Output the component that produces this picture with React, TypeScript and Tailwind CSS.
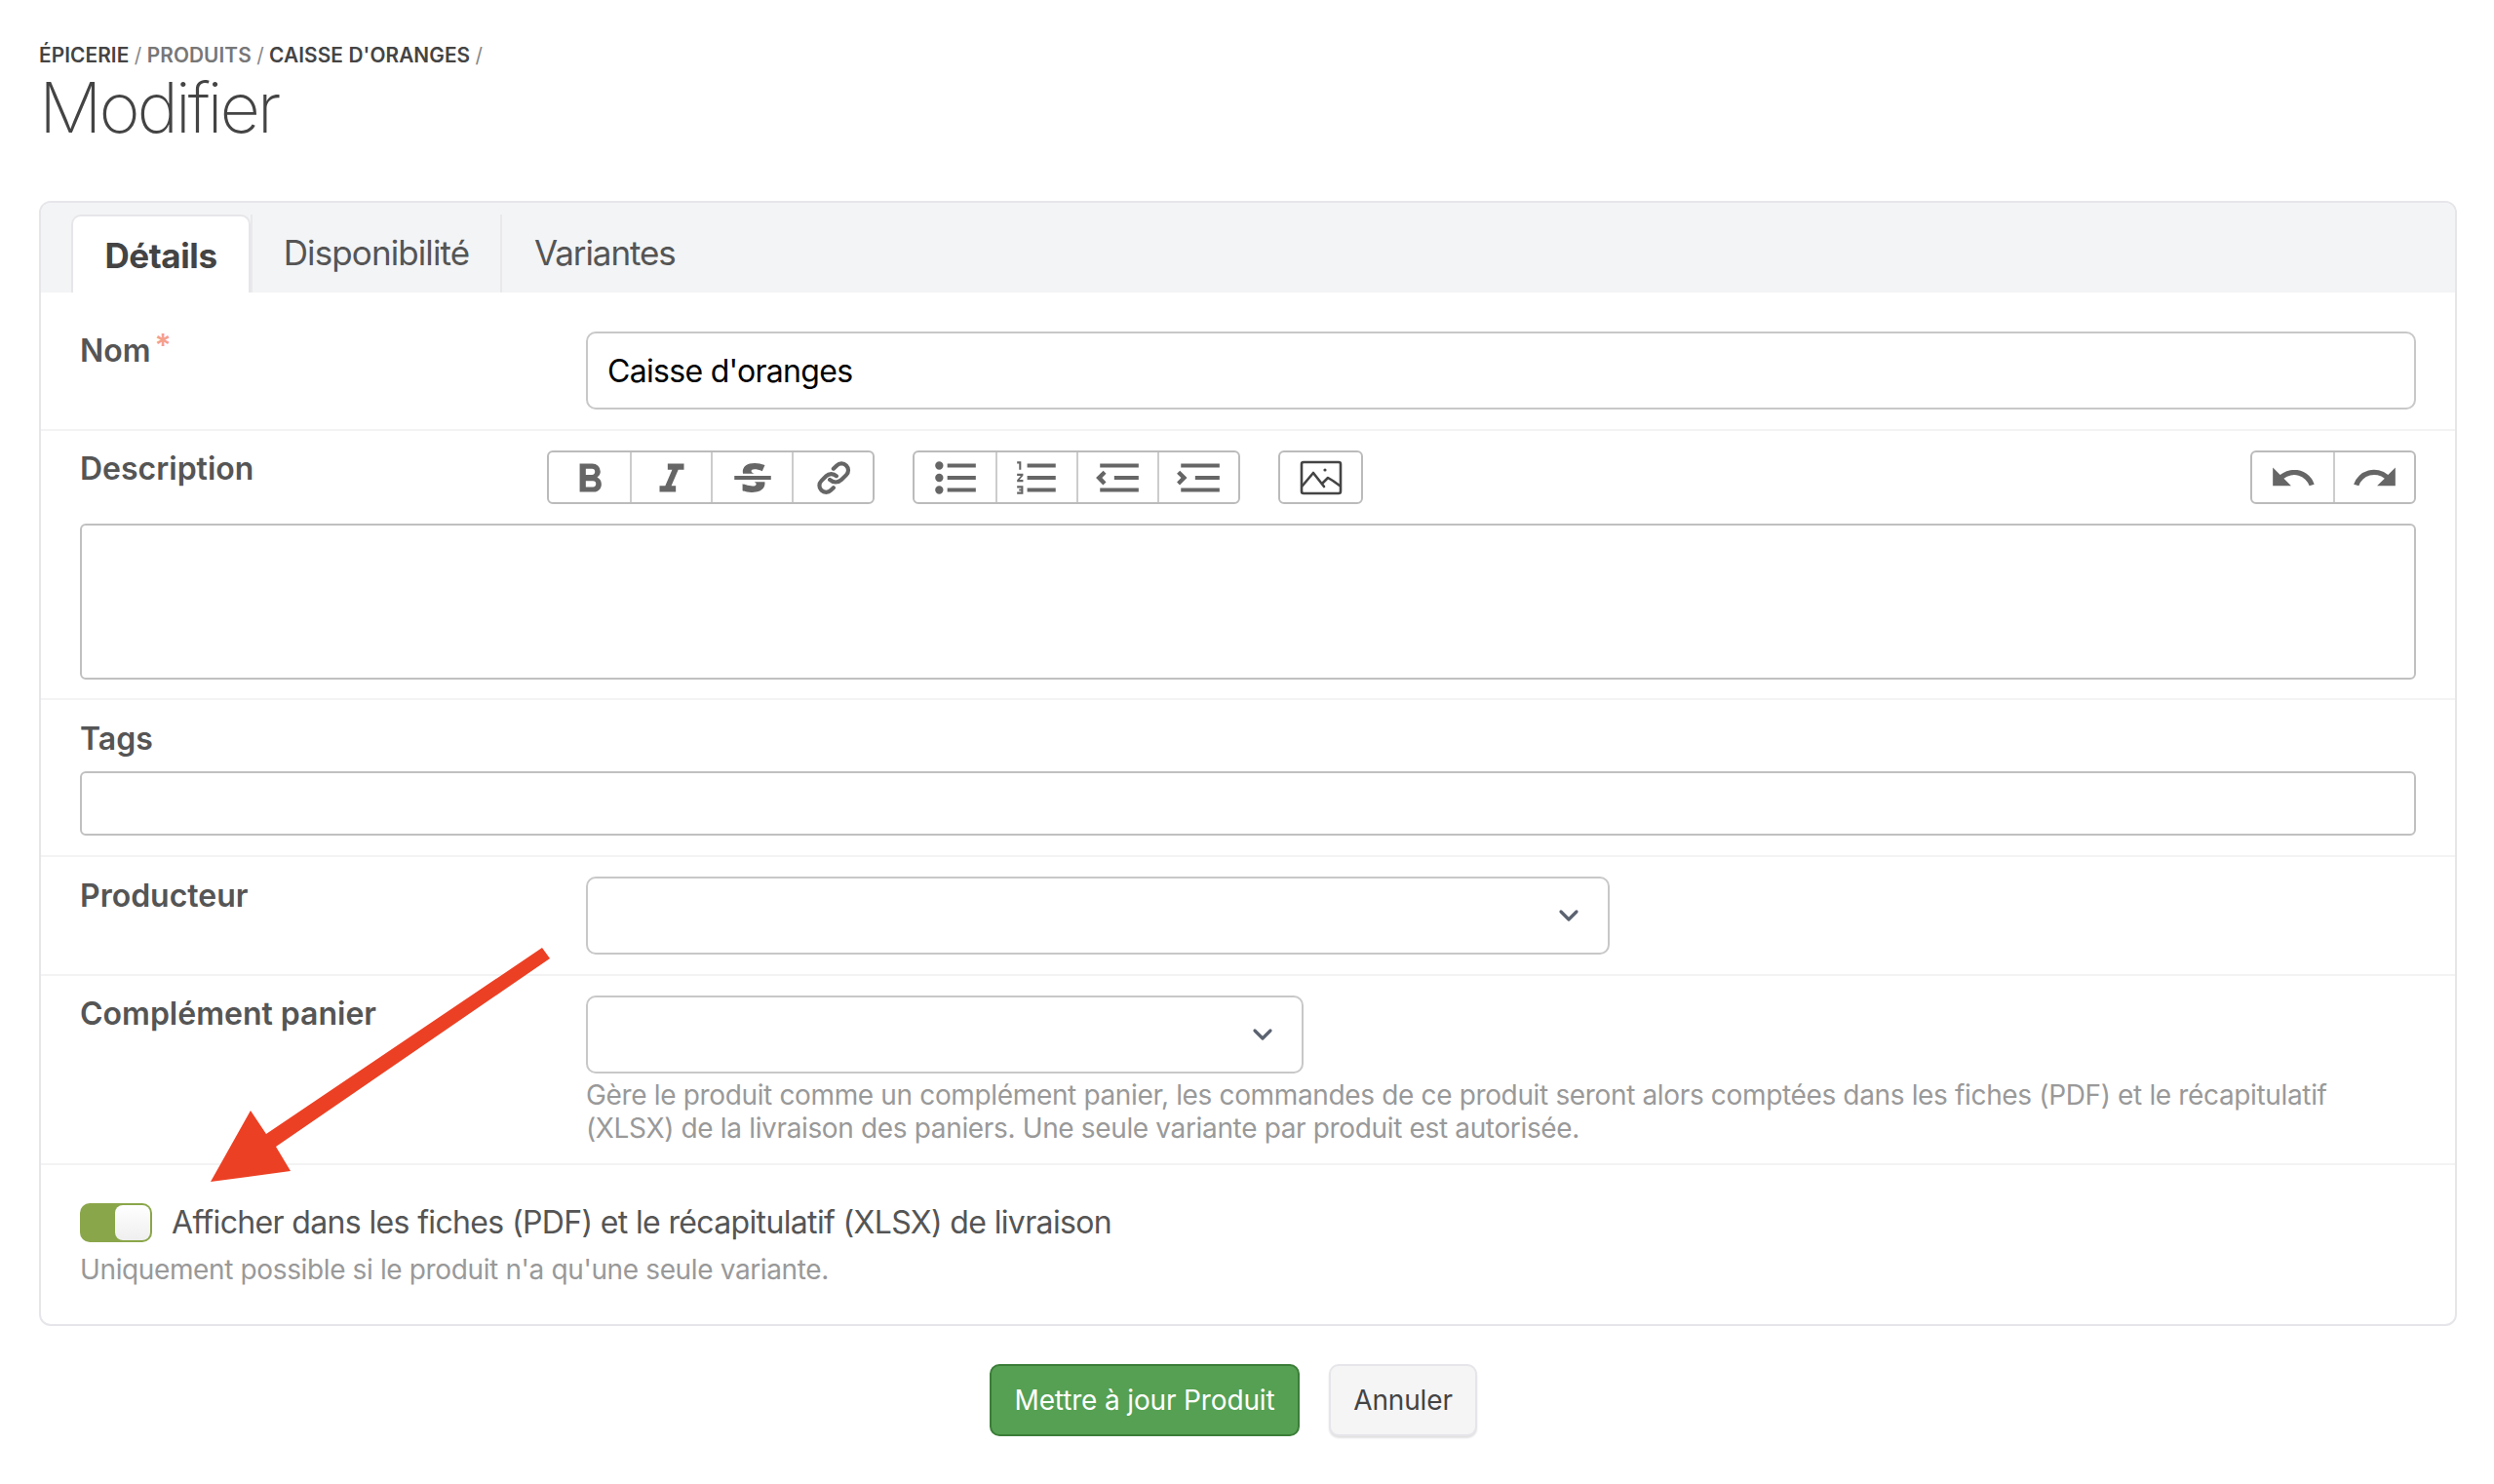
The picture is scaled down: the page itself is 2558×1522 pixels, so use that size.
import React from "react";

const P: Record<string, string> = {
  bold: "M15.6 11.8c1-.7 1.6-1.8 1.6-2.8a4 4 0 0 0-4-4H7v14h7c2.1 0 3.7-1.7 3.7-3.8 0-1.5-.8-2.8-2.1-3.4zM10 7.5h3a1.5 1.5 0 1 1 0 3h-3v-3zm3.5 9H10v-3h3.5a1.5 1.5 0 1 1 0 3z",
  italic: "M10 5v3h2.2l-3.4 8H6v3h8v-3h-2.2l3.4-8H18V5h-8z",
  strike: "M12.73 14l.28.14c.26.15.45.3.57.44.12.14.18.3.18.5 0 .3-.15.56-.44.75-.3.2-.76.3-1.39.3A13.52 13.52 0 0 1 7 14.95v3.37a10.64 10.64 0 0 0 4.84.88c1.26 0 2.35-.19 3.28-.56.93-.37 1.64-.9 2.14-1.57s.74-1.45.74-2.32c0-.26-.02-.51-.06-.75h-5.21zm-5.5-4c-.08-.34-.12-.7-.12-1.1 0-1.29.52-2.3 1.58-3.02 1.05-.72 2.5-1.08 4.34-1.08 1.62 0 3.28.34 4.97 1l-1.3 2.93c-1.47-.6-2.73-.9-3.8-.9-.55 0-.96.08-1.2.26-.26.17-.38.38-.38.64 0 .27.16.52.48.74.17.12.53.3 1.05.53H7.23zM3 13h18v-2H3v2z",
  link: "M18.948 5.258a4.337 4.337 0 0 0-6.108 0L11.217 6.87a.993.993 0 0 0 0 1.41c.392.39 1.027.39 1.418 0l1.623-1.613a2.323 2.323 0 0 1 3.271 0 2.29 2.29 0 0 1 0 3.251l-2.393 2.38a3.021 3.021 0 0 1-4.255 0l-.05-.049a1.007 1.007 0 0 0-1.418 0 .993.993 0 0 0 0 1.41l.05.049a5.036 5.036 0 0 0 7.091 0l2.394-2.38a4.275 4.275 0 0 0 0-6.072zm-13.683 13.6a4.337 4.337 0 0 0 6.108 0l1.262-1.255a.993.993 0 0 0 0-1.41 1.007 1.007 0 0 0-1.418 0L9.954 17.45a2.323 2.323 0 0 1-3.27 0 2.29 2.29 0 0 1 0-3.251l2.344-2.331a2.579 2.579 0 0 1 3.631 0c.392.39 1.027.39 1.419 0a.993.993 0 0 0 0-1.41 4.593 4.593 0 0 0-6.468 0l-2.345 2.33a4.275 4.275 0 0 0 0 6.072z",
  bullets: "M4 4a2 2 0 1 0 0 4 2 2 0 0 0 0-4zm0 6a2 2 0 1 0 0 4 2 2 0 0 0 0-4zm0 6a2 2 0 1 0 0 4 2 2 0 0 0 0-4zm4 3h14v-2H8v2zm0-6h14v-2H8v2zm0-8v2h14V5H8z",
  numbers: "M2 17h2v.5H3v1h1v.5H2v1h3v-4H2v1zm1-9h1V4H2v1h1v3zm-1 3h1.8L2 13.1v.9h3v-1H3.2L5 10.9V10H2v1zm5-6v2h14V5H7zm0 14h14v-2H7v2zm0-6h14v-2H7v2z",
  decrease: "M3 19h19v-2H3v2zm7-6h12v-2H10v2zm-8.3-.3l2.8 2.9L6 14.2 4 12l2-2-1.4-1.5L1 12l.7.7zM3 5v2h19V5H3z",
  increase: "M3 19h19v-2H3v2zm7-6h12v-2H10v2zm-6.9-1L1 14.2l1.4 1.4L6 12l-.7-.7-2.8-2.8L1 9.9 3.1 12zM3 5v2h19V5H3z",
  undo: "M12.5 8c-2.6 0-5 1-6.9 2.6L2 7v9h9l-3.6-3.6A8 8 0 0 1 20 16l2.4-.8a10.5 10.5 0 0 0-10-7.2z",
  redo: "M18.4 10.6a10.5 10.5 0 0 0-16.9 4.6L4 16a8 8 0 0 1 12.7-3.6L13 16h9V7l-3.6 3.6z",
};

function ToolIcon({ name }: { name: string }) {
  return (
    <svg viewBox="0 0 24 24" className="w-[50px] h-[50px]" fill="#666">
      <path d={P[name]} />
    </svg>
  );
}

function Group({ names, className = "" }: { names: string[]; className?: string }) {
  return (
    <div className={`flex h-[55px] border-2 border-[#bbb] rounded-[6px] ${className}`}>
      {names.map((n, i) => (
        <div
          key={n}
          className={`w-[83px] flex items-center justify-center ${i > 0 ? "border-l-2 border-[#ccc]" : ""}`}
        >
          <ToolIcon name={n} />
        </div>
      ))}
    </div>
  );
}

function Select({ width }: { width: string }) {
  return (
    <div className={`relative h-[80px] ${width} border-2 border-[#c8c8c8] rounded-[10px] bg-white`}>
      <svg
        viewBox="0 0 24 24"
        className="absolute right-[24px] top-[22px] w-[32px] h-[32px]"
        fill="none"
        stroke="#5b6270"
        strokeWidth="2.4"
        strokeLinecap="round"
        strokeLinejoin="round"
      >
        <path d="M6 9l6 6 6-6" />
      </svg>
    </div>
  );
}

const label = "text-[32px] leading-[48px] font-semibold text-[#555]";

export default function App() {
  return (
    <div className="relative min-h-[1522px] bg-white pl-[40px] pr-[38px] pt-[44px] font-['Inter',sans-serif] text-[#444]">
      <div className="text-[20.8px] leading-[25px] font-semibold uppercase tracking-[0.1px] text-[#444]">
        Épicerie <span className="font-normal text-[#888]">/</span>{" "}
        <span className="text-[#777]">Produits</span> <span className="font-normal text-[#888]">/</span>{" "}
        Caisse d'oranges <span className="font-normal text-[#888]">/</span>
      </div>
      <h1 className="text-[72px] leading-[72px] mt-[5px] font-extralight tracking-[-3.2px] text-[#444]">Modifier</h1>

      <div className="mt-[60px] border-2 border-[#e6e6ea] rounded-[12px] overflow-hidden">
        <div className="flex h-[92px] pt-[12px] pl-[31px] bg-[#f3f4f6] text-[35px] tracking-[-0.9px]">
          <div className="w-[184px] flex items-center justify-center bg-white border-2 border-b-0 border-[#e6e6ea] rounded-t-[10px] font-bold tracking-[-0.4px] text-[#444] pt-[2px]">
            Détails
          </div>
          <div className="w-[258px] flex items-center justify-center border-r-2 border-l-2 border-[#e9e9ec] text-[#555] pb-[1px]">
            Disponibilité
          </div>
          <div className="pl-[33px] flex items-center text-[#555] tracking-[-1.1px] pb-[2px]">Variantes</div>
        </div>

        <div className="flex pl-[40px] pr-[40px] pt-[40px] pb-[20px] border-b-2 border-[#f3f3f3] h-[142px]">
          <div className={`w-[519px] ${label} -mt-[4px]`}>
            Nom
            <span className="relative top-[3px] text-[#f5a08c] text-[32px] leading-none align-top ml-[4px]">*</span>
          </div>
          <input
            readOnly
            value="Caisse d'oranges"
            className="flex-1 h-[80px] border-2 border-[#c8c8c8] rounded-[10px] px-[20px] text-[32px] tracking-[-0.7px] text-black bg-white outline-none"
          />
        </div>

        <div className="pl-[40px] pr-[40px] pt-[20px] pb-[20px] border-b-2 border-[#f3f3f3] h-[276px]">
          <div className="flex items-start">
            <div className={`w-[479px] ${label} -mt-[5px]`}>Description</div>
            <Group names={["bold", "italic", "strike", "link"]} />
            <Group names={["bullets", "numbers", "decrease", "increase"]} className="ml-[39px]" />
            <div className="ml-[39px] flex h-[55px] w-[87px] items-center justify-center border-2 border-[#bbb] rounded-[6px]">
              <svg viewBox="0 0 44 40" className="w-[44px] h-[40px]" fill="none" stroke="#444" strokeWidth="2.6" strokeLinejoin="round" strokeLinecap="round">
                <rect x="2" y="4" width="40" height="32" rx="2" />
                <path d="M3 28l11-13 11 14" />
                <path d="M24 25l5-5 5 3 7 5" />
                <circle cx="26" cy="12" r="1.6" fill="#444" stroke="none" />
              </svg>
            </div>
            <Group names={["undo", "redo"]} className="ml-auto" />
          </div>
          <div className="mt-[20px] h-[160px] border-2 border-[#c0c0c0] rounded-[6px]" />
        </div>

        <div className="pl-[40px] pr-[40px] pt-[16px] border-b-2 border-[#f3f3f3] h-[161px]">
          <div className={`${label}`}>Tags</div>
          <div className="mt-[9px] h-[66px] border-2 border-[#c0c0c0] rounded-[6px]" />
        </div>

        <div className="flex pl-[40px] pr-[40px] pt-[20px] border-b-2 border-[#f3f3f3] h-[122px]">
          <div className={`w-[519px] ${label} -mt-[4px]`}>Producteur</div>
          <Select width="w-[1050px]" />
        </div>

        <div className="flex pl-[40px] pr-[40px] pt-[20px] border-b-2 border-[#f3f3f3] h-[194px]">
          <div className={`w-[519px] ${label} -mt-[5px]`}>Complément panier</div>
          <div className="flex-1">
            <Select width="w-[736px]" />
            <p className="mt-[5px] text-[28px] leading-[34px] tracking-[-0.35px] text-[#999]">
              Gère le produit comme un complément panier, les commandes de ce produit seront alors comptées dans les fiches (PDF) et le récapitulatif (XLSX) de la livraison des paniers. Une seule variante par produit est autorisée.
            </p>
          </div>
        </div>

        <div className="pl-[40px] pr-[40px] pt-[37px] h-[163px]">
          <div className="flex items-center gap-[20px]">
            <div className="flex justify-end w-[74px] h-[40px] rounded-[10px] bg-[#8aa64a] p-[2px]">
              <div className="w-[36px] h-full rounded-[8px] bg-gradient-to-b from-white to-[#efefef]" />
            </div>
            <span className="text-[32px] leading-[44px] tracking-[-0.65px] text-[#555]">
              Afficher dans les fiches (PDF) et le récapitulatif (XLSX) de livraison
            </span>
          </div>
          <p className="mt-[5px] text-[28px] leading-[42px] tracking-[-0.37px] text-[#999]">
            Uniquement possible si le produit n'a qu'une seule variante.
          </p>
        </div>
      </div>

      <div className="mt-[39px] flex justify-center gap-[30px] pr-[30px] text-[28px] tracking-[-0.15px]">
        <button className="w-[318px] h-[74px] rounded-[10px] bg-[#55a052] border-2 border-[#3b7d38] text-white">
          Mettre à jour Produit
        </button>
        <button className="w-[152px] h-[74px] rounded-[10px] bg-[#f5f5f6] border-2 border-[#e6e6ea] shadow-[0_2px_2px_rgba(0,0,0,0.12)] text-[#444]">
          Annuler
        </button>
      </div>

      <svg className="absolute left-0 top-0 pointer-events-none" width="600" height="1240" viewBox="0 0 600 1240">
        <polygon points="556,972 564,983 283,1176 298,1201 216,1212 257,1139 273,1163" fill="#ec4024" />
      </svg>
    </div>
  );
}
